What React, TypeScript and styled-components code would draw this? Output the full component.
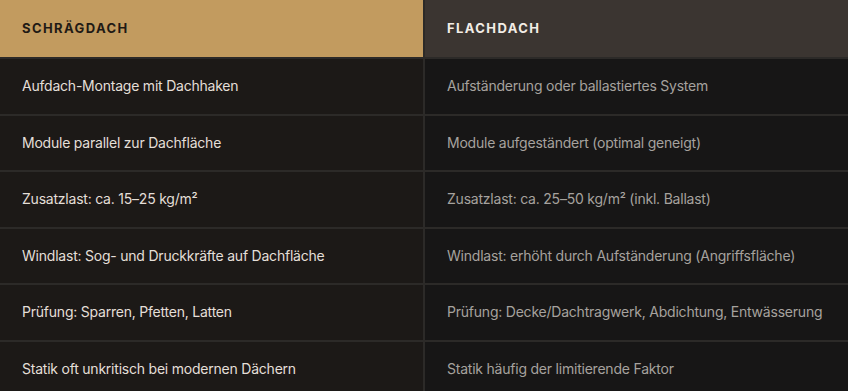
import { createGlobalStyle } from 'styled-components';
import styled from 'styled-components';

const GlobalStyle = createGlobalStyle`
  html, body {
    margin: 0;
    padding: 0;
    background: #2c2a28;
  }
  body {
    font-family: Inter, 'Noto Sans', sans-serif;
    -webkit-font-smoothing: antialiased;
  }
`;

const rows: [string, string][] = [
  ['Aufdach-Montage mit Dachhaken', 'Aufständerung oder ballastiertes System'],
  ['Module parallel zur Dachfläche', 'Module aufgeständert (optimal geneigt)'],
  ['Zusatzlast: ca. 15–25 kg/m²', 'Zusatzlast: ca. 25–50 kg/m² (inkl. Ballast)'],
  ['Windlast: Sog- und Druckkräfte auf Dachfläche', 'Windlast: erhöht durch Aufständerung (Angriffsfläche)'],
  ['Prüfung: Sparren, Pfetten, Latten', 'Prüfung: Decke/Dachtragwerk, Abdichtung, Entwässerung'],
  ['Statik oft unkritisch bei modernen Dächern', 'Statik häufig der limitierende Faktor'],
];

const App = () => {
  return (
    <>
      <GlobalStyle />
      <StyledTable>
        <StyledHead $variant="primary">Schrägdach</StyledHead>
        <StyledHead $variant="secondary">Flachdach</StyledHead>
        {rows.map(([left, right]) => (
          <StyledRowPair key={left}>
            <StyledCell $variant="primary">{left}</StyledCell>
            <StyledCell $variant="secondary">{right}</StyledCell>
          </StyledRowPair>
        ))}
      </StyledTable>
    </>
  );
};

export default App;

const StyledTable = styled.div`
  display: grid;
  grid-template-columns: 1fr 1fr;
  grid-template-rows: 57px;
  grid-auto-rows: 54.5px;
  gap: 2px;
  width: 848px;
  background: #2c2a28;
`;

const StyledRowPair = styled.div`
  display: contents;
`;

const StyledHead = styled.div<{ $variant: 'primary' | 'secondary' }>`
  display: flex;
  align-items: center;
  padding: 0 22px 1px;
  font-size: 13px;
  font-weight: 700;
  letter-spacing: 1.4px;
  text-transform: uppercase;
  background: ${({ $variant }) => ($variant === 'primary' ? '#c29b5f' : '#3b3531')};
  color: ${({ $variant }) => ($variant === 'primary' ? '#1f1a15' : '#f2ede6')};
`;

const StyledCell = styled.div<{ $variant: 'primary' | 'secondary' }>`
  display: flex;
  align-items: center;
  padding: 0 22px 1px;
  font-size: 14px;
  letter-spacing: -0.22px;
  white-space: nowrap;
  background: ${({ $variant }) => ($variant === 'primary' ? '#1c1917' : '#171616')};
  color: ${({ $variant }) => ($variant === 'primary' ? '#e4dfd8' : '#a6a29e')};
`;
